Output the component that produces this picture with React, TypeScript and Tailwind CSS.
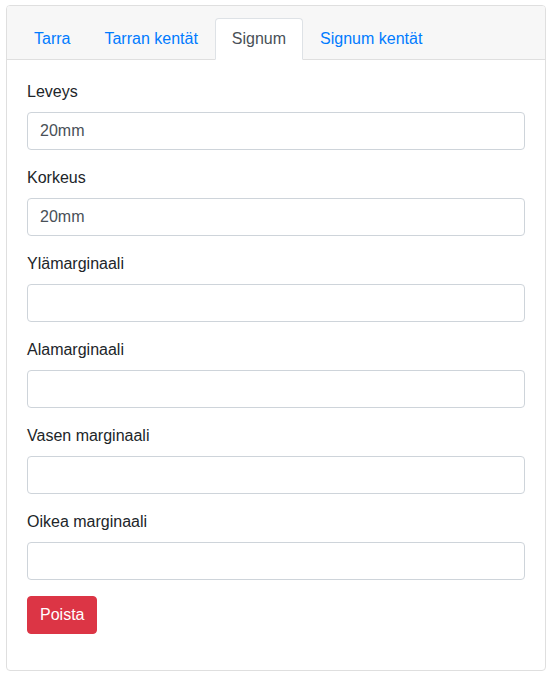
import React from "react";

const fields: { label: string; value: string }[] = [
  { label: "Leveys", value: "20mm" },
  { label: "Korkeus", value: "20mm" },
  { label: "Ylämarginaali", value: "" },
  { label: "Alamarginaali", value: "" },
  { label: "Vasen marginaali", value: "" },
  { label: "Oikea marginaali", value: "" },
];

const tabs = ["Tarra", "Tarran kentät", "Signum", "Signum kentät"];

export default function App() {
  return (
    <div className="pt-[5px] pl-[6px] text-[16px] leading-[24px] text-[#212529]" style={{ fontFamily: '"Liberation Sans", Arial, sans-serif' }}>
      <div className="w-[540px] rounded-[4px] border border-[#dfdfdf] bg-white">
        <div className="rounded-t-[3px] border-b border-[#dfdfdf] bg-[#f7f7f7] px-[20px] pt-[12px]">
          <ul className="-mx-[10px] flex">
            {tabs.map((t) => {
              const active = t === "Signum";
              return (
                <li key={t} className="-mb-px">
                  <a
                    className={
                      active
                        ? "block rounded-t-[4px] border border-[#dee2e6] border-b-white bg-white px-[16px] py-[8px] text-[#495057]"
                        : "block rounded-t-[4px] border border-transparent px-[16px] py-[8px] text-[#007bff]"
                    }
                  >
                    {t}
                  </a>
                </li>
              );
            })}
          </ul>
        </div>
        <div className="p-[20px]">
          {fields.map((f) => (
            <div key={f.label} className="mb-[16px]">
              <label className="mb-[8px] block">{f.label}</label>
              <input
                className="block h-[38px] w-full rounded-[4px] border border-[#ced4da] bg-white px-[12px] py-[6px] text-[16px] leading-[24px] text-[#495057] outline-none"
                defaultValue={f.value}
                style={{ fontFamily: '"Liberation Sans", Arial, sans-serif' }}
              />
            </div>
          ))}
          <div className="mb-[16px]">
            <button
              className="block rounded-[4px] border border-[#dc3545] bg-[#dc3545] px-[12px] py-[6px] text-[16px] leading-[24px] text-white"
              style={{ fontFamily: '"Liberation Sans", Arial, sans-serif' }}
            >
              Poista
            </button>
          </div>
        </div>
      </div>
    </div>
  );
}
